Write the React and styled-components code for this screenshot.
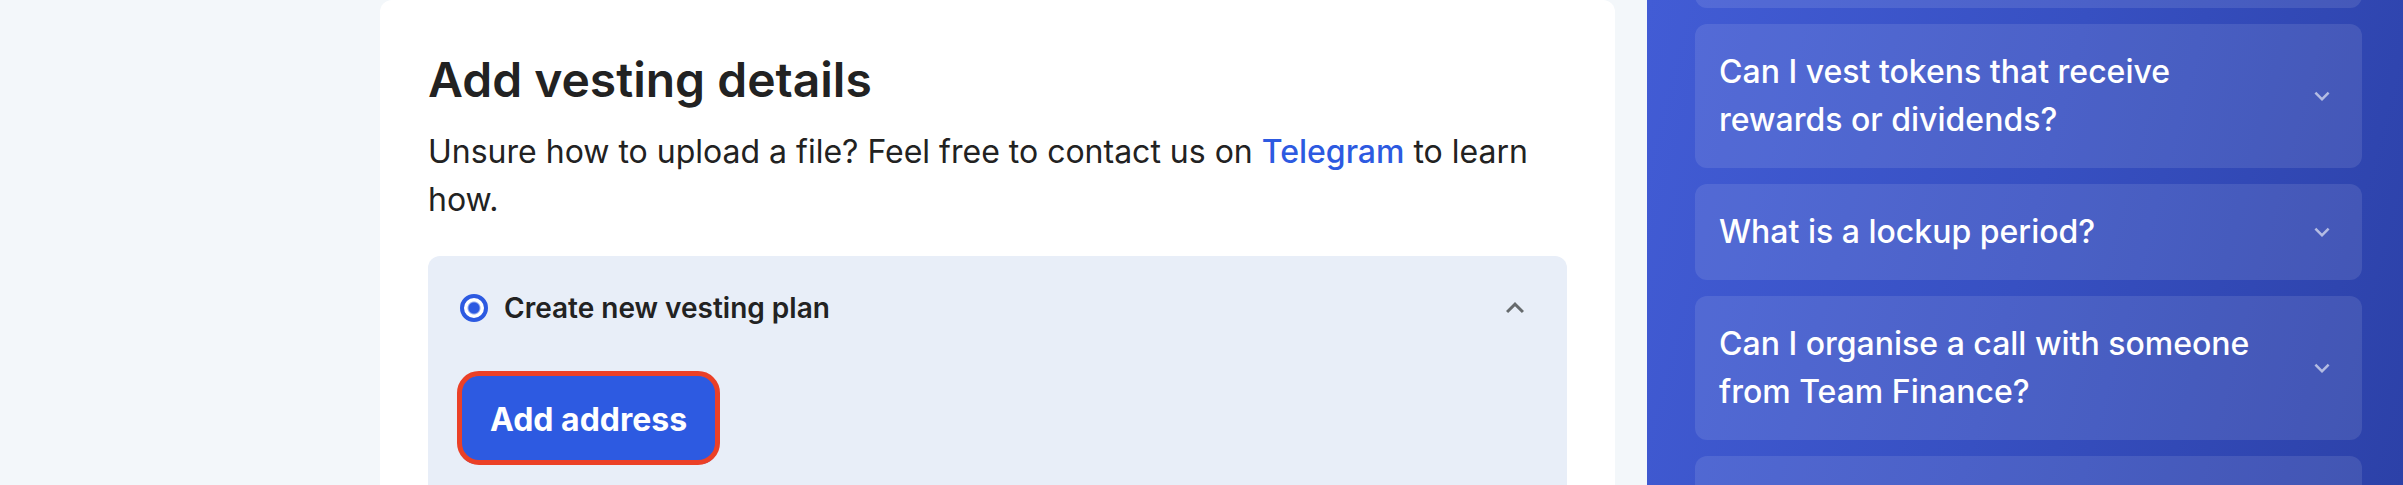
import React, { useState } from "react";
import styled, { createGlobalStyle } from "styled-components";

const GlobalStyle = createGlobalStyle`
  *, *::before, *::after { box-sizing: border-box; }
  body {
    margin: 0;
    background: #f3f7fa;
    color: #222222;
    font-family: Inter, "Liberation Sans", sans-serif;
    font-size: 32px;
    line-height: 48px;
  }
  button { font: inherit; border: 0; cursor: pointer; }
`;

const Page = styled.div`
  display: flex;
  gap: 32px;
  height: 100vh;
  padding-left: 380px;
  overflow: hidden;
`;

const Main = styled.main`
  flex: 1;
  min-width: 0;
  min-height: 100%;
  padding: 48px 48px 0;
  background: #ffffff;
  border-radius: 12px 12px 0 0;
  display: flex;
  flex-direction: column;
`;

const Title = styled.h1`
  margin: 0 0 16px;
  font-size: 48px;
  line-height: 64px;
  font-weight: 600;
`;

const Intro = styled.p`
  margin: 0 0 32px;
`;

const TextLink = styled.a`
  color: #2d5ae1;
  font-weight: 500;
  text-decoration: none;
`;

const Plan = styled.section`
  flex: 1;
  padding: 32px;
  background: #e8eef8;
  border-radius: 12px 12px 0 0;
`;

const PlanHeader = styled.div`
  display: flex;
  align-items: center;
  justify-content: space-between;
  height: 40px;
  margin-bottom: 48px;
`;

const PlanOption = styled.label`
  display: flex;
  align-items: center;
  gap: 16px;
  font-size: 28px;
  line-height: 40px;
  font-weight: 600;
`;

const Radio = styled.input`
  appearance: none;
  width: 28px;
  height: 28px;
  margin: 0;
  border: 4px solid #2d5ae1;
  border-radius: 50%;
  background: #ffffff;
  &:checked {
    background: radial-gradient(circle, #2d5ae1 0 5px, #ffffff 7px);
  }
`;

const IconButton = styled.button`
  display: grid;
  place-items: center;
  width: 40px;
  height: 40px;
  padding: 0;
  background: none;
  color: #666a6d;
`;

const PrimaryButton = styled.button`
  position: relative;
  display: block;
  padding: 20px 30px;
  border-radius: 16px;
  background: #2d5ae1;
  color: #ffffff;
  font-weight: 700;
  &::after {
    content: "";
    position: absolute;
    inset: -5px -3px -1px;
    border: 5px solid #eb4027;
    border-radius: 22px;
  }
`;

const Sidebar = styled.aside`
  flex: 0 0 756px;
  padding: 0 41px 0 48px;
  background: linear-gradient(105deg, #425cd5, #3750c2 50%, #2c41a8);
`;

const FaqList = styled.div`
  display: flex;
  flex-direction: column;
  gap: 16px;
  margin-top: -88px;
`;

const FaqItem = styled.button`
  display: flex;
  align-items: center;
  justify-content: space-between;
  gap: 16px;
  min-height: 96px;
  padding: 24px;
  border-radius: 12px;
  background: rgba(255, 255, 255, 0.1);
  color: #ffffff;
  font-weight: 500;
  text-align: left;
`;

const FaqIcon = styled.span`
  display: grid;
  place-items: center;
  flex: 0 0 32px;
  color: rgba(255, 255, 255, 0.6);
`;

const Chevron = ({ up, size }) => (
  <svg width={size} height={size} viewBox="0 0 24 24" fill="currentColor" aria-hidden="true">
    <path
      d={
        up
          ? "M12 8l-6 6 1.41 1.41L12 10.83l4.59 4.58L18 14z"
          : "M16.59 8.59L12 13.17 7.41 8.59 6 10l6 6 6-6z"
      }
    />
  </svg>
);

const questions = [
  "",
  "Can I vest tokens that receive rewards or dividends?",
  "What is a lockup period?",
  "Can I organise a call with someone from Team Finance?",
  "",
];

export default function App() {
  const [checked, setChecked] = useState(true);
  return (
    <>
      <GlobalStyle />
      <Page>
        <Main>
          <Title>Add vesting details</Title>
          <Intro>
            Unsure how to upload a file? Feel free to contact us on{" "}
            <TextLink href="#telegram">Telegram</TextLink> to learn how.
          </Intro>
          <Plan>
            <PlanHeader>
              <PlanOption>
                <Radio
                  type="radio"
                  name="plan"
                  checked={checked}
                  onChange={() => setChecked(true)}
                />
                Create new vesting plan
              </PlanOption>
              <IconButton type="button" aria-label="Collapse">
                <Chevron up size={36} />
              </IconButton>
            </PlanHeader>
            <PrimaryButton type="button">Add address</PrimaryButton>
          </Plan>
        </Main>
        <Sidebar>
          <FaqList>
            {questions.map((question, index) => (
              <FaqItem key={index} type="button">
                {question}
                {question && (
                  <FaqIcon>
                    <Chevron size={30} />
                  </FaqIcon>
                )}
              </FaqItem>
            ))}
          </FaqList>
        </Sidebar>
      </Page>
    </>
  );
}
